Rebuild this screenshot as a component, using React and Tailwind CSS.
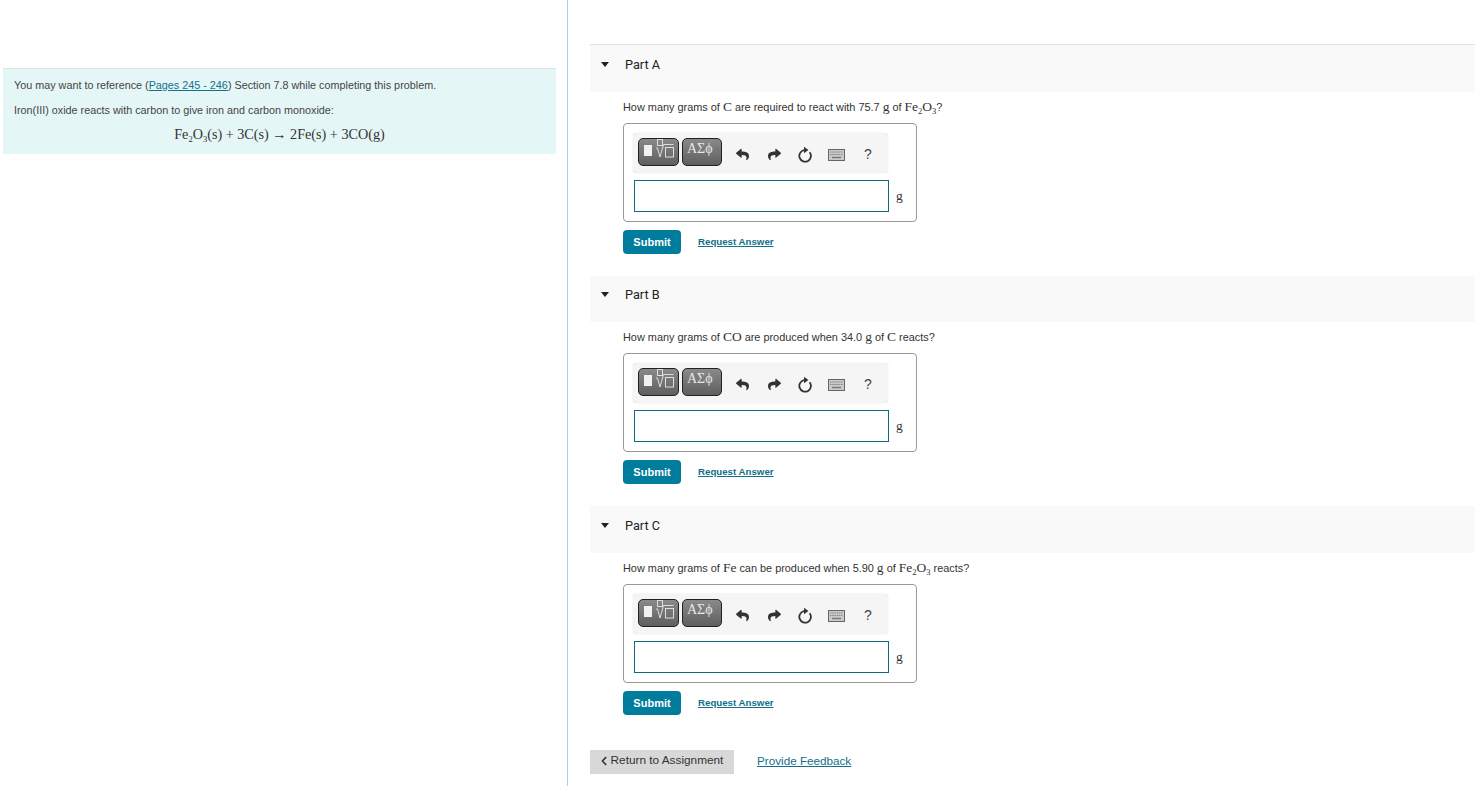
import { FaReply, FaShare, FaChevronLeft } from 'react-icons/fa';

const serif = 'font-["Liberation_Serif",serif]';

function M({ children }) {
  return <span className={`${serif} text-[13.5px] text-[#333]`}>{children}</span>;
}

function Sub({ children }) {
  return <sub className="align-[-1px] text-[8.5px] leading-none">{children}</sub>;
}

function Fe2O3() {
  return <M>Fe<Sub>2</Sub>O<Sub>3</Sub></M>;
}

function Toolbar() {
  return (
    <div className="flex h-10 w-[255px] items-start rounded bg-[#f5f5f5] pl-[5px] pt-[5px] shadow-[0_0_1px_#bbb]">
      <div className="h-[28px] w-[41px] rounded-[5px] border border-[#222] bg-gradient-to-b from-[#8a8a8a] to-[#5f5f5f]">
        <svg width="39" height="26" viewBox="1 1 39 26" fill="none">
          <rect x="6" y="7" width="8" height="11" fill="#f2f2f2" />
          <rect x="19.5" y="1.5" width="5" height="6" stroke="#ddd" />
          <path d="M18 10h1.5l2.5 9 3.5-12.5h10" stroke="#ddd" />
          <rect x="27.5" y="9.5" width="8" height="9.5" stroke="#ddd" />
        </svg>
      </div>
      <div className={`ml-[3px] h-[28px] w-[40px] rounded-[5px] border border-[#222] bg-gradient-to-b from-[#8a8a8a] to-[#5f5f5f] pl-[4px] text-[14px] leading-[20px] text-[#e8e8e8] ${serif}`}>
        AΣϕ
      </div>
      <FaReply className="ml-[14px] mt-[10px] text-[13px] text-[#333]" />
      <FaShare className="ml-[19px] mt-[10px] text-[13px] text-[#333]" />
      <svg className="ml-[16px] mt-[8px]" width="16" height="17" viewBox="0 0 16 17" fill="none">
        <path d="M7 4.2a5.8 5.8 0 1 0 5.6 2" stroke="#333" strokeWidth="1.8" />
        <path d="M7 0.8l4.4 3.2L7 7.2z" fill="#333" />
      </svg>
      <svg className="ml-[15px] mt-[11px]" width="17" height="12" viewBox="0 0 17 12">
        <rect x="0.5" y="0.5" width="16" height="11" fill="#c9c9c9" stroke="#666" />
        <path d="M2 3h13M2 5.5h13" stroke="#888" strokeWidth="1" strokeDasharray="1.5 0.7" />
        <path d="M4 8.5h9" stroke="#777" strokeWidth="1.4" />
      </svg>
      <span className="ml-[19px] mt-[6px] text-[14px] leading-[20px] text-[#444]">?</span>
    </div>
  );
}

function Part({ title, question, className, headerClass }) {
  return (
    <section className={className}>
      <div className={`flex items-center bg-[#f9f9f9] ${headerClass}`}>
        <span className="ml-[11px] h-0 w-0 border-x-[4.5px] border-t-[5px] border-x-transparent border-t-[#222]" />
        <h2 className="ml-4 font-['Roboto',sans-serif] text-[12.7px] text-[#222]">{title}</h2>
      </div>
      <div className="pl-[33px]">
        <p className="mt-1 h-[22px] text-[10.9px] leading-[22px] text-[#333]">{question}</p>
        <div className="mt-[5px] h-[99px] w-[294px] rounded border border-[#999] pl-[9px] pt-[9px]">
          <Toolbar />
          <div className="mt-[7px] flex items-center pl-px">
            <div className="h-[32px] w-[255px] border border-[#0f6a80] bg-white" />
            <span className="ml-[7px] pb-[3px]"><M>g</M></span>
          </div>
        </div>
        <div className="mt-2 flex items-center">
          <button className="h-[24px] w-[58px] rounded-sm bg-[#007c9c] text-[11px] font-bold text-white">Submit</button>
          <a className="ml-[17px] text-[9.7px] font-bold text-[#12708a] underline">Request Answer</a>
        </div>
      </div>
    </section>
  );
}

export default function App() {
  return (
    <div className="flex h-[786px] overflow-hidden bg-white font-['Liberation_Sans',sans-serif]">
      <aside className="h-full w-[568px] shrink-0 border-r border-[#b3cfe6] pl-[3px] pt-[68px]">
        <div className="h-[86px] w-[553px] border-t border-[#d5e5e8] bg-[#e5f6f7] px-[11px] pt-[8px] text-[10.8px] text-[#444]">
          <p className="h-4 leading-4">
            You may want to reference (<a className="text-[#12708a] underline">Pages 245 - 246</a>) Section 7.8 while completing this problem.
          </p>
          <p className="mt-[9px] h-4 leading-4">Iron(III) oxide reacts with carbon to give iron and carbon monoxide:</p>
          <p className={`mt-[6px] text-center text-[14.2px] leading-5 text-[#333] ${serif}`}>
            Fe<Sub>2</Sub>O<Sub>3</Sub>(s) + 3C(s) → 2Fe(s) + 3CO(g)
          </p>
        </div>
      </aside>
      <main className="min-w-0 flex-1 pl-[22px] pt-[44px]">
        <div className="border-t border-[#e2e2e2]">
          <Part
            headerClass="h-[47px] pb-[8px]"
            title="Part A"
            question={<>How many grams of <M>C</M> are required to react with 75.7 <M>g</M> of <Fe2O3 />?</>}
          />
          <Part
            className="mt-[22px]"
            headerClass="h-[46px] pb-[9px]"
            title="Part B"
            question={<>How many grams of <M>CO</M> are produced when 34.0 <M>g</M> of <M>C</M> reacts?</>}
          />
          <Part
            className="mt-[22px]"
            headerClass="h-[47px] pb-[8px]"
            title="Part C"
            question={<>How many grams of <M>Fe</M> can be produced when 5.90 <M>g</M> of <Fe2O3 /> reacts?</>}
          />
        </div>
        <div className="mt-[35px] flex items-center">
          <button className="flex h-[24px] w-[144px] items-center justify-center gap-[2px] bg-[#d8d8d8] pb-[2px] pr-[2px] text-[11.8px] text-[#333]">
            <FaChevronLeft className="text-[10px]" />
            Return to Assignment
          </button>
          <a className="ml-[23px] pb-[3px] text-[11.7px] text-[#12708a] underline">Provide Feedback</a>
        </div>
      </main>
    </div>
  );
}
